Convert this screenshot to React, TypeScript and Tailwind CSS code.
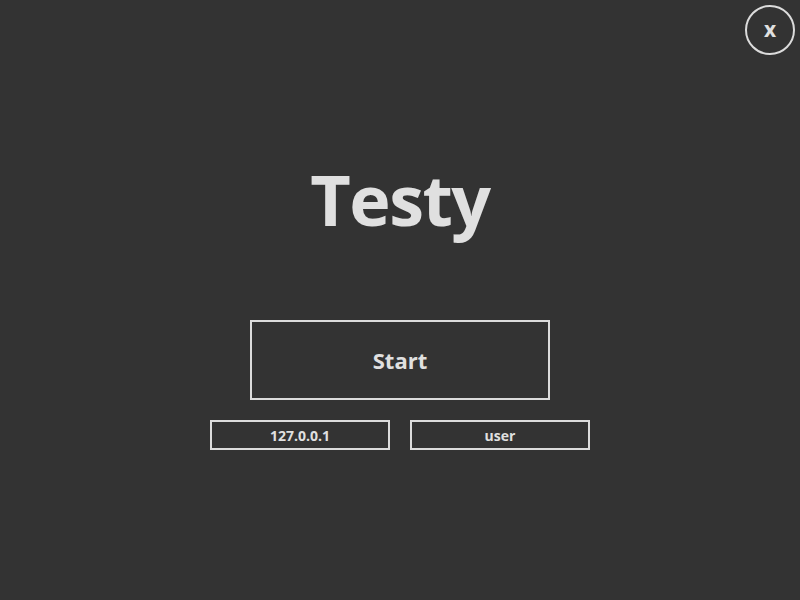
export default function App() {
  return (
    <div
      className="relative w-[800px] h-[600px] bg-[#333333] text-[#e0e0e0] overflow-hidden"
      style={{ fontFamily: '"Open Sans", "Noto Sans", sans-serif' }}
    >
      <button className="absolute left-[745px] top-[5px] w-[50px] h-[50px] rounded-full border-2 border-[#dcdcdc] flex items-center justify-center text-[21px] font-bold leading-none text-[#e0e0e0] pb-[2px]">
        x
      </button>
      <div className="flex flex-col items-center pt-[164px]">
        <h1 className="h-[70px] text-[70px] leading-[70px] font-bold tracking-[-1.5px]">Testy</h1>
        <button className="mt-[86px] w-[300px] h-[80px] border-2 border-[#dcdcdc] flex items-center justify-center text-[22px] font-bold">
          Start
        </button>
        <div className="mt-[20px] flex gap-[20px]">
          <div className="w-[180px] h-[30px] border-2 border-[#dcdcdc] flex items-center justify-center text-[14px] font-bold">
            127.0.0.1
          </div>
          <div className="w-[180px] h-[30px] border-2 border-[#dcdcdc] flex items-center justify-center text-[14px] font-bold">
            user
          </div>
        </div>
      </div>
    </div>
  );
}
